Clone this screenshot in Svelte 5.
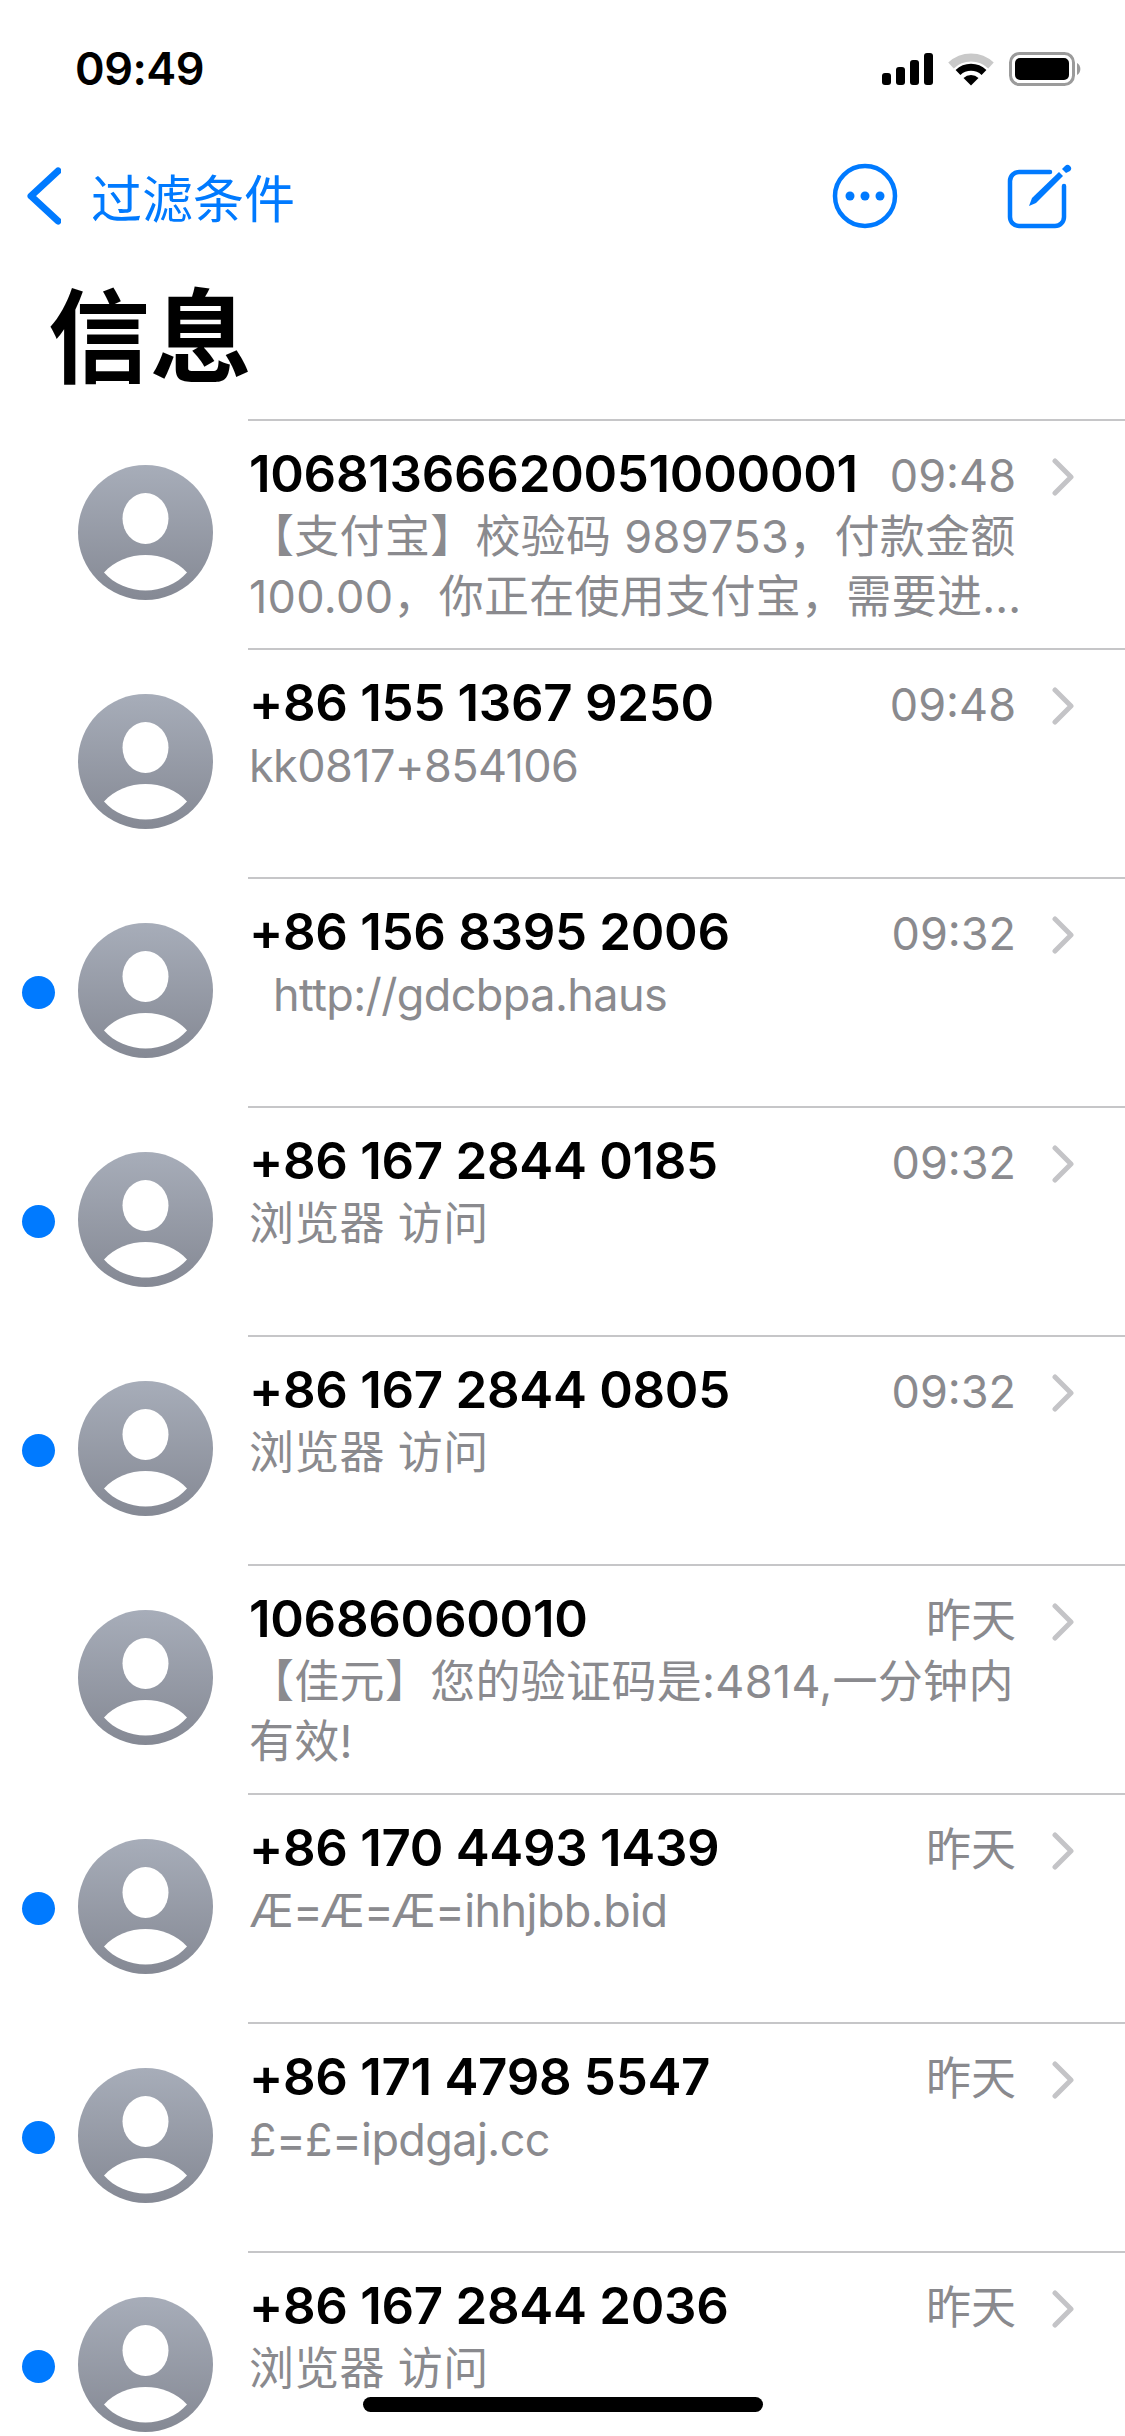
<script lang="ts">
	type Row = { name: string; time: string; preview: string; unread?: boolean; latin?: boolean };

	const rows: Row[] = [
		{ name: '10681366620051000001', time: '09:48', preview: '【支付宝】校验码 989753，付款金额 100.00，你正在使用支付宝，需要进…' },
		{ name: '+86 155 1367 9250', time: '09:48', preview: 'kk0817+854106', latin: true },
		{ name: '+86 156 8395 2006', time: '09:32', preview: '\u00a0 http://gdcbpa.haus', unread: true, latin: true },
		{ name: '+86 167 2844 0185', time: '09:32', preview: '浏览器 访问', unread: true },
		{ name: '+86 167 2844 0805', time: '09:32', preview: '浏览器 访问', unread: true },
		{ name: '10686060010', time: '昨天', preview: '【佳元】您的验证码是:4814,一分钟内有效!' },
		{ name: '+86 170 4493 1439', time: '昨天', preview: 'Æ=Æ=Æ=ihhjbb.bid', unread: true, latin: true },
		{ name: '+86 171 4798 5547', time: '昨天', preview: '£=£=ipdgaj.cc', unread: true, latin: true },
		{ name: '+86 167 2844 2036', time: '昨天', preview: '浏览器 访问', unread: true },
	];
</script>

<div class="screen">
	<div class="status">
		<span class="clock">09:49</span>
		<div class="status-icons">
			<svg width="51" height="32" viewBox="0 0 51 32">
				<rect x="0" y="20" width="9" height="12" rx="3" />
				<rect x="14" y="14" width="9" height="18" rx="3" />
				<rect x="28" y="7" width="9" height="25" rx="3" />
				<rect x="42" y="0" width="9" height="32" rx="3" />
			</svg>
			<svg width="46" height="34" viewBox="0 0 46 34">
				<path d="M3 13.5 A29 29 0 0 1 43 13.5" fill="none" stroke="#c9c9c9" stroke-width="8" />
				<path d="M10 20.5 A19 19 0 0 1 36 20.5" fill="none" stroke="#000" stroke-width="7" />
				<path d="M23 33.5 L15.5 26 A11 11 0 0 1 30.5 26 Z" />
			</svg>
			<svg width="73" height="34" viewBox="0 0 73 34">
				<rect x="1.5" y="1.5" width="63" height="31" rx="9" fill="none" stroke="#9b9b9b" stroke-width="3" />
				<rect x="6" y="6" width="54" height="22" rx="5" />
				<path d="M68 11 A7 7 0 0 1 68 23 Z" fill="#9b9b9b" />
			</svg>
		</div>
	</div>

	<div class="nav">
		<div class="back">
			<svg width="36" height="60" viewBox="0 0 36 60">
				<path d="M33 5 L6 30 L33 55" fill="none" stroke="#007aff" stroke-width="7" stroke-linecap="round" stroke-linejoin="round" />
			</svg>
			<span>过滤条件</span>
		</div>
		<div class="actions">
			<svg width="68" height="68" viewBox="0 0 68 68">
				<circle cx="34" cy="34" r="30" fill="none" stroke="#007aff" stroke-width="4.5" />
				<circle cx="19" cy="34" r="4.5" fill="#007aff" />
				<circle cx="34" cy="34" r="4.5" fill="#007aff" />
				<circle cx="49" cy="34" r="4.5" fill="#007aff" />
			</svg>
			<svg width="66" height="66" viewBox="0 0 66 66">
				<path d="M43 9 H12 A9 9 0 0 0 3 18 V54 A9 9 0 0 0 12 63 H48 A9 9 0 0 0 57 54 V23" fill="none" stroke="#007aff" stroke-width="4.5" stroke-linecap="round" />
				<path d="M22 43 L25 35 L52 9 L56 13 L29 40 Z" fill="#007aff" />
				<path d="M55 6 L58 3 A3 3 0 0 1 63 8 L59 10 Z" fill="#007aff" />
			</svg>
		</div>
	</div>

	<h1>信息</h1>

	<svg class="defs" width="0" height="0">
		<defs>
			<linearGradient id="avatar-fill" x1="0" y1="0" x2="0" y2="1">
				<stop offset="0" stop-color="#a7adb9" />
				<stop offset="1" stop-color="#858994" />
			</linearGradient>
		</defs>
	</svg>

	<div class="list">
		{#each rows as row}
			<div class="row">
				<div class="lead">
					{#if row.unread}<span class="dot"></span>{/if}
					<svg class="avatar" width="135" height="135" viewBox="0 0 135 135">
						<circle cx="67.5" cy="67.5" r="67.5" fill="url(#avatar-fill)" />
						<ellipse cx="67.5" cy="53.5" rx="23" ry="25.5" fill="#fff" />
						<path d="M26 107.5 C36 96 52 90 67.5 90 C83 90 99 96 109 107.5 C99 119 83 125.5 67.5 125.5 C52 125.5 36 119 26 107.5 Z" fill="#fff" />
					</svg>
				</div>
				<div class="body">
					<div class="top">
						<span class="name">{row.name}</span>
						<span class="time">{row.time}</span>
						<svg class="chevron" width="24" height="38" viewBox="0 0 24 38">
							<path d="M4 3 L20 19 L4 35" fill="none" stroke="#c4c4c7" stroke-width="5" stroke-linecap="round" stroke-linejoin="round" />
						</svg>
					</div>
					<p class="preview" class:latin={row.latin}>{row.preview}</p>
				</div>
			</div>
		{/each}
	</div>

	<div class="home"></div>
</div>

<style>
	:global(body) {
		background: #fff;
	}

	.screen {
		position: relative;
		width: 1125px;
		height: 2436px;
		overflow: hidden;
		background: #fff;
		font-family: Inter, 'Noto Sans CJK SC', sans-serif;
		color: #000;
	}

	.status {
		display: flex;
		justify-content: space-between;
		align-items: center;
		height: 34px;
		padding: 52px 43px 0 75px;
	}

	.clock {
		font-size: 45px;
		font-weight: 600;
		line-height: 34px;
		letter-spacing: -0.5px;
	}

	.status-icons {
		display: flex;
		align-items: center;
		gap: 15px;
	}

	.nav {
		display: flex;
		justify-content: space-between;
		align-items: center;
		height: 70px;
		margin-top: 75px;
		padding: 0 52px 0 25px;
	}

	.back {
		display: flex;
		align-items: center;
		gap: 30px;
		color: #007aff;
		font-size: 51px;
	}

	.actions {
		display: flex;
		align-items: center;
		gap: 108px;
	}

	h1 {
		margin: 0;
		padding: 47px 0 0 48px;
		height: 141px;
		line-height: 120px;
		font-size: 102px;
		font-weight: 700;
		box-sizing: content-box;
	}

	.defs {
		position: absolute;
	}

	.row {
		display: flex;
		height: 229px;
	}

	.lead {
		position: relative;
		flex: none;
		width: 248px;
	}

	.avatar {
		position: absolute;
		left: 78px;
		top: 46px;
	}

	.dot {
		position: absolute;
		left: 22px;
		top: 99px;
		width: 33px;
		height: 33px;
		border-radius: 50%;
		background: #007aff;
	}

	.body {
		flex: 1;
		border-top: 2px solid #c6c6c8;
		padding: 23px 0 0 1px;
	}

	.top {
		display: flex;
		align-items: center;
		height: 60px;
		padding-right: 50px;
	}

	.name {
		flex: 1;
		font-size: 51px;
		font-weight: 600;
		line-height: 60px;
		letter-spacing: -0.3px;
		white-space: nowrap;
	}

	.time {
		position: relative;
		top: 2px;
		font-size: 45px;
		line-height: 60px;
		color: #8a8a8e;
		margin-right: 35px;
	}

	.chevron {
		position: relative;
		top: 3px;
	}

	.preview {
		width: 780px;
		margin: 3px 0 0;
		font-size: 45px;
		line-height: 60px;
		letter-spacing: 0.3px;
		color: #8a8a8e;
	}

	.preview.latin {
		letter-spacing: -0.6px;
	}

	.home {
		position: absolute;
		left: 363px;
		top: 2397px;
		width: 400px;
		height: 15px;
		border-radius: 8px;
		background: #000;
	}
</style>
